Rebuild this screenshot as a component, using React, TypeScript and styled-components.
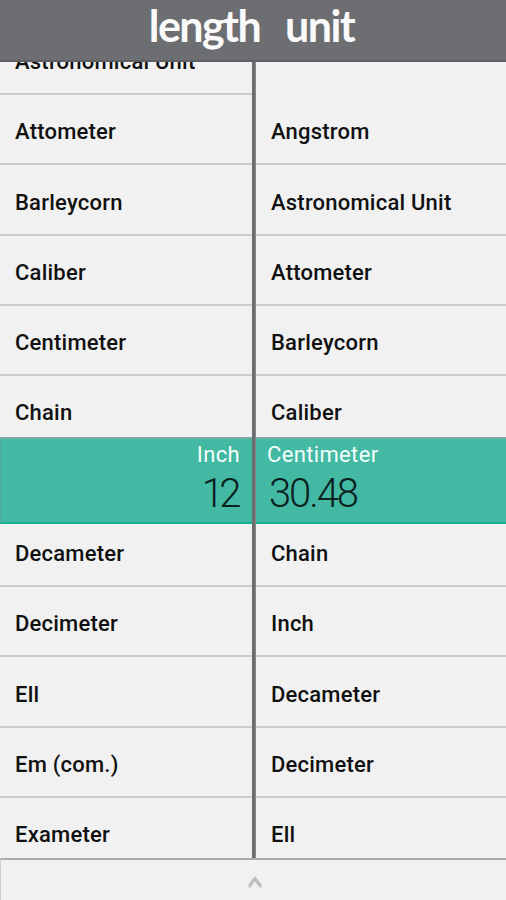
import React from "react";
import styled, { createGlobalStyle } from "styled-components";

const GlobalStyle = createGlobalStyle`
  body {
    margin: 0;
    background: #f1f1f1;
  }
  * {
    box-sizing: border-box;
  }
`;

const Screen = styled.main`
  display: flex;
  flex-direction: column;
  width: 506px;
  height: 900px;
  overflow: hidden;
  background: #f1f1f1;
  font-family: Roboto, "Liberation Sans", sans-serif;
`;

const Header = styled.header`
  display: flex;
  justify-content: center;
  flex: 0 0 62px;
  background: #6d6e72;
  border-bottom: 2px solid #606164;
`;

const Title = styled.h1`
  display: flex;
  gap: 25px;
  margin: 0 3px 0 0;
  color: #fafafa;
  font: 700 43px/52px Lato, sans-serif;
  letter-spacing: -1.6px;
  white-space: nowrap;
`;

const Picker = styled.section`
  position: relative;
  display: flex;
  flex: 0 0 796px;
  overflow: hidden;
`;

const UnitList = styled.ul<{ $wide?: boolean }>`
  flex: ${(p) => (p.$wide ? "1" : "0 0 252px")};
  margin: -37.2px 0 0;
  padding: 0;
  list-style: none;
`;

const UnitRow = styled.li<{ $blank?: boolean }>`
  display: flex;
  align-items: center;
  height: 70.3px;
  padding: 5px 0 0 15px;
  border-bottom: 2px solid ${(p) => (p.$blank ? "transparent" : "#cccccc")};
  color: #111;
  font-size: 22px;
  font-weight: 500;
  letter-spacing: 0.22px;
  white-space: nowrap;
`;

const Divider = styled.div`
  position: relative;
  z-index: 2;
  flex: 0 0 4px;
  background: #6d6e70;
  border-right: 1px solid #858687;
`;

const SelectedBand = styled.div`
  position: absolute;
  top: 375px;
  left: 0;
  right: 0;
  display: grid;
  grid-template-columns: 252px 1fr;
  height: 87px;
  background: #43b9a4;
  border-top: 2px solid #80aaa3;
  border-bottom: 2px solid #16b095;
  border-left: 1px solid #55a99b;
`;

const Selection = styled.div<{ $align: "left" | "right" }>`
  display: flex;
  flex-direction: column;
  align-items: ${(p) => (p.$align === "right" ? "flex-end" : "flex-start")};
  padding: ${(p) => (p.$align === "right" ? "2px 13px 0 0" : "2px 0 0 14px")};
`;

const SelectedUnit = styled.span`
  color: #f4fffc;
  font-size: 22px;
  line-height: 28px;
  letter-spacing: 0.35px;
`;

const Reading = styled.span<{ $tight?: boolean }>`
  margin: ${(p) => (p.$tight ? "0 3px 0 0" : "0 0 0 2px")};
  color: #0b211d;
  font: 300 40px/49px Roboto, sans-serif;
  letter-spacing: ${(p) => (p.$tight ? "-4.5px" : "-2.1px")};
`;

const Drawer = styled.footer`
  display: flex;
  justify-content: center;
  align-items: center;
  flex: 1;
  padding: 4px 0 0 3px;
  background: #f1f1f1;
  border-top: 2px solid #ababab;
  border-left: 1px solid #cfcfcf;
`;

const fromUnits = [
  "Astronomical Unit",
  "Attometer",
  "Barleycorn",
  "Caliber",
  "Centimeter",
  "Chain",
  "",
  "Decameter",
  "Decimeter",
  "Ell",
  "Em (com.)",
  "Exameter",
];

const toUnits = [
  "",
  "Angstrom",
  "Astronomical Unit",
  "Attometer",
  "Barleycorn",
  "Caliber",
  "",
  "Chain",
  "Inch",
  "Decameter",
  "Decimeter",
  "Ell",
];

export default function App() {
  return (
    <>
      <GlobalStyle />
      <Screen>
        <Header>
          <Title>
            <span>length</span>
            <span>unit</span>
          </Title>
        </Header>
        <Picker>
          <UnitList>
            {fromUnits.map((unit, i) => (
              <UnitRow key={i}>{unit}</UnitRow>
            ))}
          </UnitList>
          <Divider />
          <UnitList $wide>
            {toUnits.map((unit, i) => (
              <UnitRow key={i} $blank={i === 0}>
                {unit}
              </UnitRow>
            ))}
          </UnitList>
          <SelectedBand>
            <Selection $align="right">
              <SelectedUnit>Inch</SelectedUnit>
              <Reading $tight>12</Reading>
            </Selection>
            <Selection $align="left">
              <SelectedUnit>Centimeter</SelectedUnit>
              <Reading>30.48</Reading>
            </Selection>
          </SelectedBand>
        </Picker>
        <Drawer>
          <svg width="16" height="18" viewBox="0 0 16 18" fill="none">
            <path d="M1.5 14.5V11.5L8 3L14.5 11.5V14.5H12.5L8 8.2L3.5 14.5Z" fill="#bdbdbd" />
          </svg>
        </Drawer>
      </Screen>
    </>
  );
}
